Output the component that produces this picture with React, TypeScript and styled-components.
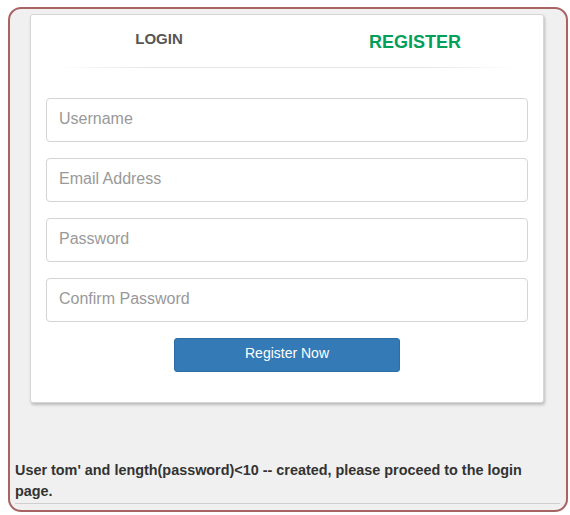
import React from "react";
import styled, { createGlobalStyle } from "styled-components";

const Global = createGlobalStyle`
  html, body { margin: 0; padding: 0; background: #fff; }
  body { font-family: "Liberation Sans", Arial, sans-serif; }
  * { box-sizing: border-box; }
`;

const Frame = styled.div`
  margin: 7px 0 0 8px;
  width: 560px;
  height: 505px;
  border: 2px solid #a86464;
  border-radius: 13px;
  background: #f0f0f0;
  padding: 5px 22px 0 20px;
  display: flex;
  flex-direction: column;
`;

const Card = styled.div`
  background: #fff;
  border: 1px solid #d6d6d6;
  border-radius: 3px;
  box-shadow: 1px 2px 3px rgba(0, 0, 0, 0.22);
  height: 389px;
  display: flex;
  flex-direction: column;
`;

const Tabs = styled.div`
  display: grid;
  grid-template-columns: 1fr 1fr;
  height: 52px;
`;

const TabLine = styled.div`
  height: 1px;
  margin: 0 25px;
  background: linear-gradient(to right, rgba(230,230,230,0), #e6e6e6 20%, #e6e6e6 80%, rgba(230,230,230,0));
`;

const Tab = styled.div<{ $active?: boolean }>`
  display: flex;
  justify-content: center;
  padding-top: ${(p) => (p.$active ? "17px" : "15px")};
  font-weight: bold;
  font-size: ${(p) => (p.$active ? "18px" : "15px")};
  color: ${(p) => (p.$active ? "#029f5b" : "#555")};
  line-height: 1.15;
`;

const Form = styled.div`
  display: flex;
  flex-direction: column;
  gap: 16px;
  padding: 30px 15px 0 15px;
`;

const Input = styled.input`
  width: 100%;
  height: 44px;
  border: 1px solid #d5d5d5;
  border-radius: 4px;
  padding: 0 12px 3px;
  font-family: "Liberation Sans", Arial, sans-serif;
  font-size: 16px;
  color: #555;
  outline: none;
  &::placeholder { color: #999; }
`;

const ButtonRow = styled.div`
  display: flex;
  justify-content: center;
`;

const Button = styled.button`
  width: 226px;
  height: 34px;
  background: #337ab7;
  border: 1px solid #2e6da4;
  border-radius: 3px;
  color: #fff;
  font-family: "Liberation Sans", Arial, sans-serif;
  font-size: 14px;
  padding: 0 0 5px;
`;

const Spacer = styled.div`
  flex: 1;
`;

const Message = styled.div`
  font-weight: bold;
  font-size: 14.4px;
  line-height: 21px;
  color: #333;
  margin: 0 -16px 0 -15px;
  padding: 0 12px 1px 0;
  border-bottom: 1px solid #cfcfcf;
`;

const BottomGap = styled.div`
  flex: 0 0 6px;
`;

export default function App() {
  return (
    <>
      <Global />
      <Frame>
        <Card>
          <Tabs>
            <Tab>LOGIN</Tab>
            <Tab $active>REGISTER</Tab>
          </Tabs>
          <TabLine />
          <Form>
            <Input placeholder="Username" />
            <Input placeholder="Email Address" />
            <Input type="password" placeholder="Password" />
            <Input type="password" placeholder="Confirm Password" />
            <ButtonRow>
              <Button>Register Now</Button>
            </ButtonRow>
          </Form>
        </Card>
        <Spacer />
        <Message>
          User tom' and length(password)&lt;10 -- created, please proceed to the login page.
        </Message>
        <BottomGap />
      </Frame>
    </>
  );
}
